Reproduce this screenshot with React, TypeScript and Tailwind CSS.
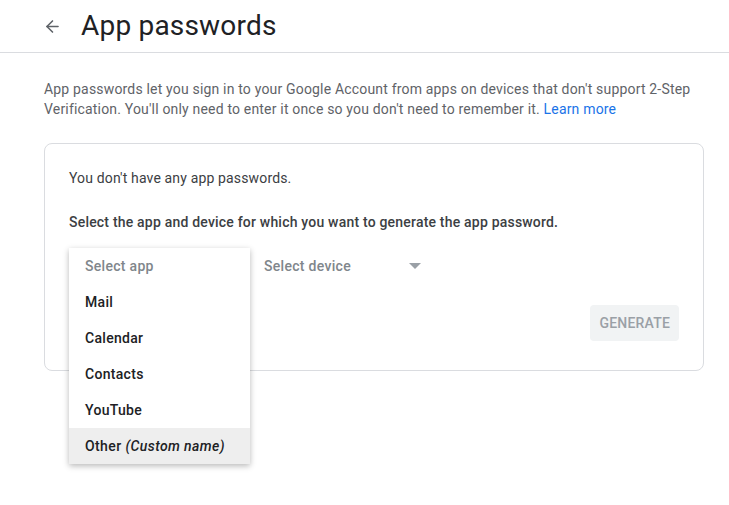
import { ArrowLeft } from "lucide-react";

const apps = ["Mail", "Calendar", "Contacts", "YouTube"];

export default function App() {
  return (
    <div className="min-h-screen bg-white font-['Roboto',sans-serif] text-[#202124]">
      {/* Header */}
      <header className="flex h-[53px] items-center border-b border-[#dadce0] pl-[43px]">
        <ArrowLeft className="h-[19px] w-[19px] text-[#5f6368]" strokeWidth={2} />
        <h1 className="ml-[19px] text-[28px] leading-none tracking-[0.2px] text-[#202124]">App passwords</h1>
      </header>

      <main className="pl-[44px] pr-[25px] pt-[26px]">
        <p className="text-[14px] leading-[20px] tracking-[0.18px] text-[#5f6368]">
          App passwords let you sign in to your Google Account from apps on devices that don't support 2-Step
          Verification. You'll only need to enter it once so you don't need to remember it.{" "}
          <a className="text-[#1a73e8]">Learn more</a>
        </p>

        <section className="relative mt-[24px] h-[228px] rounded-lg border border-[#dadce0] px-[24px] pt-[24px]">
          <p className="text-[14px] leading-[20px] tracking-[0.15px] text-[#3c4043]">You don't have any app passwords.</p>
          <p className="mt-[24px] text-[14px] font-medium leading-[20px] tracking-[0.2px] text-[#3c4043]">
            Select the app and device for which you want to generate the app password.
          </p>

          <div className="mt-[16px] flex items-start">
            {/* Open app menu */}
            <div className="relative z-10 w-[181px] bg-white shadow-[0_2px_6px_rgba(0,0,0,0.28)]">
              <div className="flex h-[36px] items-center px-[16px] text-[14px] font-medium tracking-[0.3px] text-[#80868b]">
                Select app
              </div>
              {apps.map((a) => (
                <div key={a} className="flex h-[36px] items-center px-[16px] text-[14px] font-medium tracking-[0.3px] text-[#202124]">
                  {a}
                </div>
              ))}
              <div className="flex h-[36px] items-center bg-[#eeeeee] px-[16px] text-[14px] font-medium tracking-[0.4px] text-[#202124]">
                Other&nbsp;<i>(Custom name)</i>
              </div>
            </div>

            <div className="ml-[14px] flex h-[36px] w-[160px] items-center justify-between pr-[3px] text-[14px] font-medium tracking-[0.3px] text-[#80868b]">
              <span>Select device</span>
              <span className="h-0 w-0 border-x-[6px] border-t-[6px] border-x-transparent border-t-[#9aa0a6]" />
            </div>
          </div>

          <button className="absolute right-[24px] top-[161px] h-[36px] rounded-sm bg-[#f1f3f4] px-[9px] text-[14px] font-medium tracking-[0.2px] text-[#9aa0a6]">
            GENERATE
          </button>
        </section>
      </main>
    </div>
  );
}
